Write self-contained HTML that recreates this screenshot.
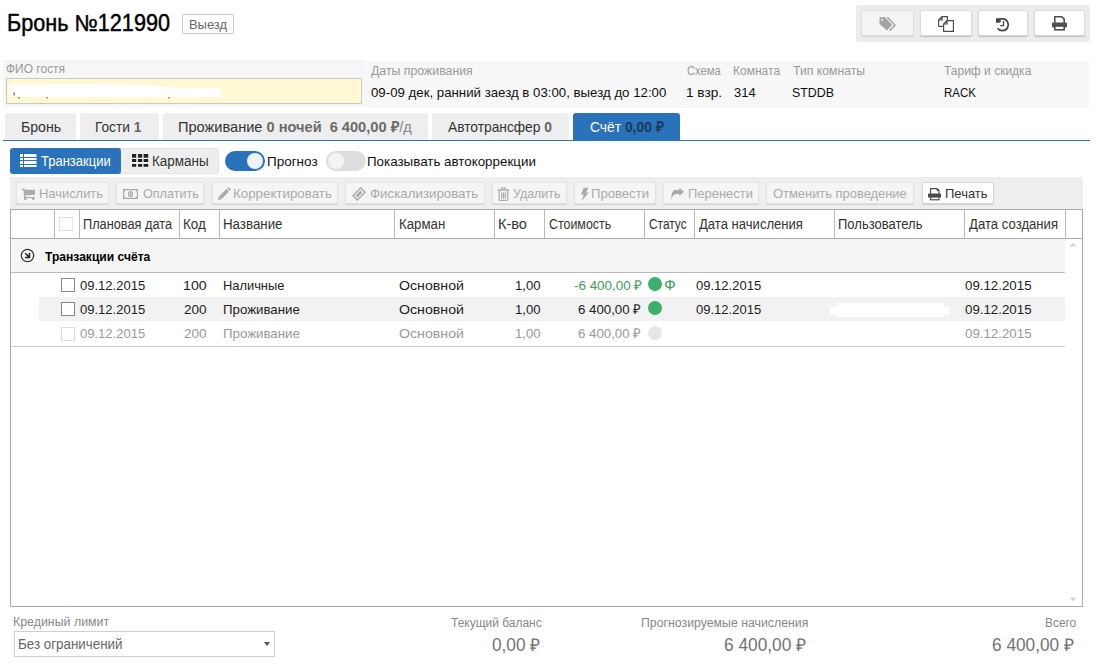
<!DOCTYPE html>
<html><head><meta charset="utf-8">
<style>
*{box-sizing:border-box;margin:0;padding:0}
html,body{width:1096px;height:667px;overflow:hidden;background:#fff}
body{position:relative;font-family:"Liberation Sans",sans-serif;color:#222;font-size:13px}
.a{position:absolute}
.t{position:absolute;white-space:nowrap;line-height:1;transform-origin:0 0}
svg{position:absolute;display:block}
</style></head><body>


<!-- title -->
<div class="a" style="left:182px;top:14px;width:52px;height:20px;border:1px solid #c8c8c8;border-radius:2px;background:#fff"></div>

<!-- top right toolbar -->
<div class="a" style="left:856px;top:5px;width:234px;height:37px;background:#ececec;border-radius:3px"></div>
<div class="a" style="left:861px;top:10px;width:53px;height:26px;background:#f4f4f4;border:1px solid #e0e0e0;border-radius:2px;box-shadow:0 1px 1px rgba(0,0,0,.12)"></div>
<div class="a" style="left:920px;top:10px;width:52px;height:26px;background:#fff;border:1px solid #dcdcdc;border-radius:2px;box-shadow:0 1px 1px rgba(0,0,0,.2)"></div>
<div class="a" style="left:978px;top:10px;width:50px;height:26px;background:#fff;border:1px solid #dcdcdc;border-radius:2px;box-shadow:0 1px 1px rgba(0,0,0,.2)"></div>
<div class="a" style="left:1034px;top:10px;width:51px;height:26px;background:#fff;border:1px solid #dcdcdc;border-radius:2px;box-shadow:0 1px 1px rgba(0,0,0,.2)"></div>
<svg style="left:878px;top:16px" width="20" height="16" viewBox="0 0 20 16"><path d="M1.5 1.2 H7 L14.2 9 L8.8 14.6 L1.5 7.8 Z" fill="#a3a3a3"/><rect x="3.3" y="3" width="1.8" height="1.8" fill="#f4f4f4"/><path d="M9.4 1.2 L17 9.2 L11.6 14.8" fill="none" stroke="#a3a3a3" stroke-width="1.5"/></svg>
<svg style="left:937px;top:15px" width="18" height="18" viewBox="0 0 18 18"><path d="M1.6 11.4 V5 L5 1.6 H10.4 V5.2 M1.6 11.4 H6.4 M5 1.6 V5 H1.6" fill="none" stroke="#4a4a4a" stroke-width="1.15"/><path d="M6.6 16.4 V9 L10 5.6 H16.4 V16.4 Z M10 5.6 V9 H6.6" fill="#fff" stroke="#4a4a4a" stroke-width="1.15"/></svg>
<svg style="left:995px;top:16px" width="16" height="16" viewBox="0 0 16 16"><path d="M4.5 2.9 H8 A5.9 5.9 0 1 1 2.6 12.2" fill="none" stroke="#474747" stroke-width="1.75"/><path d="M1 2.2 H5.8 V5.2 L4.4 6.7 H1 Z" fill="#474747"/><path d="M8.5 5 V9.6 H5.2" fill="none" stroke="#474747" stroke-width="1.3"/></svg>
<svg style="left:1051px;top:15px" width="17" height="16" viewBox="0 0 17 16"><path d="M3.8 8 V1.8 H10.8 L13.2 4.2 V8" fill="none" stroke="#505050" stroke-width="1.6"/><rect x="1" y="7.4" width="15" height="5" rx="1" fill="#505050"/><rect x="3.8" y="11" width="9.4" height="3.8" fill="#fff" stroke="#505050" stroke-width="1.6"/></svg>

<!-- info panel -->
<div class="a" style="left:3px;top:60px;width:362px;height:47px;background:#f6f6f6;border-top:1px solid #f0f0f0"></div><div class="a" style="left:365px;top:61px;width:724px;height:47px;background:#f7f7f7"></div>
<div class="a" style="left:6px;top:78px;width:356px;height:26px;background:#fef9d3;border:1px solid #c9c9c9"></div>
<svg style="left:0px;top:76px" width="230" height="30" viewBox="0 76 230 30"><path d="M10 84.6 L60 84 L120 84.2 L150 85.5 L175 87.5 L221 88.6 L221 97.6 L150 97.2 L95 97.6 L70 97.3 L10 96.6 Z" fill="#fff"/><rect x="13.6" y="92.4" width="1" height="3" fill="#5a3a20"/><rect x="18.4" y="97.2" width="1.2" height="1.2" fill="#20305a"/><rect x="46.4" y="97.2" width="1.2" height="1.2" fill="#5a3a20"/><rect x="168.2" y="97.2" width="1.2" height="1.2" fill="#5a3a20"/></svg>

<!-- tabs -->
<div class="a" style="left:5px;top:113px;width:71px;height:27px;background:#eee;border-radius:3px 3px 0 0"></div>
<div class="a" style="left:80px;top:113px;width:79px;height:27px;background:#eee;border-radius:3px 3px 0 0"></div>
<div class="a" style="left:163px;top:113px;width:265px;height:27px;background:#eee;border-radius:3px 3px 0 0"></div>
<div class="a" style="left:432px;top:113px;width:137px;height:27px;background:#eee;border-radius:3px 3px 0 0"></div>
<div class="a" style="left:573px;top:113px;width:107px;height:27px;background:#2a72b9;border-radius:3px 3px 0 0"></div>
<div class="a" style="left:3px;top:140px;width:1087px;height:1px;background:#2f72b8"></div>

<!-- segmented -->
<div class="a" style="left:10px;top:148px;width:209px;height:26px;background:#eee;border:1px solid #e2e2e2;border-radius:3px"></div>
<div class="a" style="left:10px;top:148px;width:111px;height:26px;background:#2a72b9;border-radius:3px"></div>
<svg style="left:19px;top:153px" width="19" height="15" viewBox="0 0 19 15"><g fill="#fff"><rect x="1" y="1" width="3" height="3"/><rect x="5" y="1" width="12.5" height="3"/><rect x="1" y="5" width="3" height="2"/><rect x="5" y="5" width="12.5" height="2"/><rect x="1" y="8" width="3" height="3"/><rect x="5" y="8" width="12.5" height="3"/><rect x="1" y="12" width="3" height="2"/><rect x="5" y="12" width="12.5" height="2"/></g></svg>
<svg style="left:131px;top:153px" width="19" height="15" viewBox="0 0 19 15"><g fill="#222"><rect x="1" y="1" width="4.2" height="3.7"/><rect x="7" y="1" width="4.2" height="3.7"/><rect x="12.6" y="1" width="4.6" height="3.7"/><rect x="1" y="6" width="4.2" height="3"/><rect x="7" y="6" width="4.2" height="3"/><rect x="12.6" y="6" width="4.6" height="3"/><rect x="1" y="11" width="4.2" height="2.8"/><rect x="7" y="11" width="4.2" height="2.8"/><rect x="12.6" y="11" width="4.6" height="2.8"/></g></svg>

<!-- toggles -->
<div class="a" style="left:225px;top:151px;width:40px;height:20px;background:#2a72b9;border-radius:10px"></div>
<div class="a" style="left:247px;top:153px;width:16px;height:16px;background:#eef3f9;border-radius:50%"></div>
<div class="a" style="left:326px;top:151px;width:40px;height:20px;background:#ddd;border-radius:10px"></div>
<div class="a" style="left:327px;top:152px;width:18px;height:18px;background:#f4f4f4;border:1px solid #ddd;border-radius:50%"></div>

<!-- action toolbar -->
<div class="a" style="left:10px;top:177px;width:1073px;height:33px;background:#eee"></div>
<div class="a" style="left:16px;top:182px;width:93px;height:22px;background:#f5f5f5;border:1px solid #e4e4e4;border-radius:2px;box-shadow:0 1px 1px rgba(0,0,0,.12)"></div>
<div class="a" style="left:116px;top:182px;width:88px;height:22px;background:#f5f5f5;border:1px solid #e4e4e4;border-radius:2px;box-shadow:0 1px 1px rgba(0,0,0,.12)"></div>
<div class="a" style="left:212px;top:182px;width:126px;height:22px;background:#f5f5f5;border:1px solid #e4e4e4;border-radius:2px;box-shadow:0 1px 1px rgba(0,0,0,.12)"></div>
<div class="a" style="left:345px;top:182px;width:140px;height:22px;background:#f5f5f5;border:1px solid #e4e4e4;border-radius:2px;box-shadow:0 1px 1px rgba(0,0,0,.12)"></div>
<div class="a" style="left:492px;top:182px;width:75px;height:22px;background:#f5f5f5;border:1px solid #e4e4e4;border-radius:2px;box-shadow:0 1px 1px rgba(0,0,0,.12)"></div>
<div class="a" style="left:574px;top:182px;width:82px;height:22px;background:#f5f5f5;border:1px solid #e4e4e4;border-radius:2px;box-shadow:0 1px 1px rgba(0,0,0,.12)"></div>
<div class="a" style="left:663px;top:182px;width:96px;height:22px;background:#f5f5f5;border:1px solid #e4e4e4;border-radius:2px;box-shadow:0 1px 1px rgba(0,0,0,.12)"></div>
<div class="a" style="left:766px;top:182px;width:148px;height:22px;background:#f5f5f5;border:1px solid #e4e4e4;border-radius:2px;box-shadow:0 1px 1px rgba(0,0,0,.12)"></div>
<div class="a" style="left:922px;top:182px;width:72px;height:22px;background:#fff;border:1px solid #d5d5d5;border-radius:2px;box-shadow:0 1px 1px rgba(0,0,0,.12)"></div>


<!-- action icons -->
<svg style="left:21px;top:188px" width="15" height="13" viewBox="0 0 15 13"><g fill="#aaa"><path d="M0.8 0.8 H3.8 L4.6 11.8 H3.2 L2.6 2.2 H0.8 Z"/><path d="M3.6 1.8 H14 V6.8 L4.4 7.6 Z"/><rect x="4" y="9" width="9.6" height="1.1"/><rect x="3.4" y="9" width="2" height="3"/><rect x="11.4" y="9" width="2" height="3"/></g></svg>
<svg style="left:122px;top:188px" width="17" height="12" viewBox="0 0 17 12"><g fill="#aaa"><path d="M1 1 H16 V11 H1 Z M2.2 3.6 V8.4 L3.6 9.8 H13.4 L14.8 8.4 V3.6 L13.4 2.2 H3.6 Z" fill-rule="evenodd"/><path d="M8.5 3 A2.6 3 0 1 0 8.5 9 A2.6 3 0 1 0 8.5 3 Z M8.5 4.2 A1.4 1.8 0 1 1 8.5 7.8 A1.4 1.8 0 1 1 8.5 4.2 Z" fill-rule="evenodd"/><rect x="8" y="4.6" width="1.2" height="2.8"/></g></svg>
<svg style="left:217px;top:187px" width="14" height="14" viewBox="0 0 14 14"><g fill="#aaa"><path d="M1 13 L1.8 9.6 L9.4 2 L12 4.6 L4.4 12.2 Z"/><path d="M10.2 1.2 L11.2 0.4 Q11.6 0.1 12 0.4 L13.6 2 Q13.9 2.4 13.6 2.8 L12.8 3.8 Z"/></g><path d="M2.6 10 L4 11.4" stroke="#f5f5f5" stroke-width="0.8"/></svg>
<svg style="left:351px;top:186px" width="16" height="16" viewBox="0 0 16 16"><g transform="rotate(-45 8 8)" fill="#aaa"><path d="M1.8 4.2 H14.2 V11.8 H1.8 Z M3.4 5.6 V10.4 H12.6 V5.6 Z" fill-rule="evenodd"/><rect x="4.6" y="6.6" width="6.8" height="2.8"/></g></svg>
<svg style="left:497px;top:187px" width="13" height="14" viewBox="0 0 13 14"><g fill="none" stroke="#aaa" stroke-width="1.2"><path d="M2.2 3.6 V12.4 Q2.2 13.4 3.2 13.4 H9.8 Q10.8 13.4 10.8 12.4 V3.6"/><path d="M4.6 2.6 V1 H8.4 V2.6"/><path d="M4.7 5.4 V11.4 M6.5 5.4 V11.4 M8.3 5.4 V11.4"/></g><rect x="0.8" y="2.4" width="11.4" height="1.4" fill="#aaa"/></svg>
<svg style="left:580px;top:187px" width="9" height="14" viewBox="0 0 9 14"><path d="M3.8 0.8 H8.4 L6 5.6 H8.8 L2 13.8 L3.6 7.4 H0.9 Z" fill="#aaa"/></svg>
<svg style="left:669px;top:187px" width="16" height="14" viewBox="0 0 16 14"><path d="M15 4.8 L10.2 0.8 V3 H7.2 C3.8 3 2 5.4 2.4 13.2 C3.2 9.2 4.8 7 7.8 7 H10.2 V8.9 Z" fill="#aaa"/></svg>
<svg style="left:927px;top:187px" width="15" height="14" viewBox="0 0 15 14"><path d="M3.6 6.8 V1.6 H10 L12 3.6 V6.8" fill="none" stroke="#4a4a4a" stroke-width="1.15"/><path d="M9.6 1.2 L12.4 4 H9.6 Z" fill="#4a4a4a"/><rect x="1" y="6.4" width="13" height="4.2" rx="0.6" fill="#4a4a4a"/><rect x="3.6" y="10" width="8.4" height="2.8" fill="#fff" stroke="#4a4a4a" stroke-width="1.15"/></svg>

<!-- table -->
<div class="a" style="left:10px;top:209px;width:1073px;height:398px;border:1px solid #aaa;background:#fff"></div>
<div class="a" style="left:11px;top:238px;width:1071px;height:1px;background:#aaa"></div>
<div class="a" style="left:54px;top:210px;width:1px;height:28px;background:#bbb"></div>
<div class="a" style="left:79px;top:210px;width:1px;height:28px;background:#bbb"></div>
<div class="a" style="left:179px;top:210px;width:1px;height:28px;background:#bbb"></div>
<div class="a" style="left:219px;top:210px;width:1px;height:28px;background:#bbb"></div>
<div class="a" style="left:394px;top:210px;width:1px;height:28px;background:#bbb"></div>
<div class="a" style="left:494px;top:210px;width:1px;height:28px;background:#bbb"></div>
<div class="a" style="left:544px;top:210px;width:1px;height:28px;background:#bbb"></div>
<div class="a" style="left:644px;top:210px;width:1px;height:28px;background:#bbb"></div>
<div class="a" style="left:694px;top:210px;width:1px;height:28px;background:#bbb"></div>
<div class="a" style="left:834px;top:210px;width:1px;height:28px;background:#bbb"></div>
<div class="a" style="left:964px;top:210px;width:1px;height:28px;background:#bbb"></div>
<div class="a" style="left:1065px;top:210px;width:1px;height:28px;background:#bbb"></div>
<div class="a" style="left:59px;top:217px;width:14px;height:14px;border:1px solid #e2e2e2;background:#fff"></div>

<!-- group row -->
<div class="a" style="left:11px;top:239px;width:1054px;height:33px;background:#f5f5f5"></div>
<div class="a" style="left:11px;top:272px;width:1054px;height:1px;background:#bbb"></div>
<svg style="left:19px;top:247px" width="17" height="17" viewBox="0 0 17 17"><circle cx="8.5" cy="8.5" r="6.2" fill="none" stroke="#333" stroke-width="1.3"/><path d="M6.2 6.2 L10.3 10.3 M6 10.5 H10.5 V6" fill="none" stroke="#222" stroke-width="1.5"/></svg>

<!-- rows -->
<div class="a" style="left:39px;top:297px;width:1026px;height:24px;background:#f2f2f2"></div>
<div class="a" style="left:837px;top:303px;width:107px;height:14px;background:#fff"></div><div class="a" style="left:830px;top:306.5px;width:119px;height:8px;background:#fff"></div>
<div class="a" style="left:11px;top:346px;width:1054px;height:1px;background:#ccc"></div>

<div class="a" style="left:61px;top:278px;width:14px;height:14px;border:1px solid #888;background:#fff"></div>
<div class="a" style="left:648px;top:277px;width:14px;height:14px;border-radius:50%;background:#3caf6a"></div>

<div class="a" style="left:61px;top:302px;width:14px;height:14px;border:1px solid #888;background:#fff"></div>
<div class="a" style="left:648px;top:301px;width:14px;height:14px;border-radius:50%;background:#3caf6a"></div>

<div class="a" style="left:61px;top:327px;width:14px;height:14px;border:1px solid #ddd;background:#fff"></div>
<div class="a" style="left:648px;top:326px;width:14px;height:14px;border-radius:50%;background:#e6e6e6"></div>

<!-- scrollbar arrows -->
<svg style="left:1069px;top:242px" width="8" height="5" viewBox="0 0 8 5"><path d="M0.5 4.5 L4 0.8 L7.5 4.5 Z" fill="#d4d4d4"/></svg>
<svg style="left:1069px;top:597px" width="8" height="5" viewBox="0 0 8 5"><path d="M0.5 0.5 L4 4.2 L7.5 0.5 Z" fill="#d4d4d4"/></svg>

<!-- footer -->
<div class="a" style="left:14px;top:631px;width:261px;height:26px;border:1px solid #d0d0d0;background:#fff"></div>
<svg style="left:263px;top:641px" width="8" height="6" viewBox="0 0 8 6"><path d="M1 1 H7 L4 5 Z" fill="#555"/></svg>


<div class="t" style="left:7.12px;top:12.00px;font-size:23px;font-weight:400;color:#000;transform:scaleX(0.9415);-webkit-text-stroke:0.45px #000;">Бронь №121990</div>
<div class="t" style="left:188.74px;top:18.00px;font-size:13.5px;font-weight:400;color:#666;transform:scaleX(0.9564);">Выезд</div>
<div class="t" style="left:6.40px;top:63.00px;font-size:12px;font-weight:400;color:#999;transform:scaleX(0.9983);">ФИО гостя</div>
<div class="t" style="left:371.40px;top:65.00px;font-size:12px;font-weight:400;color:#999;transform:scaleX(1.0263);">Даты проживания</div>
<div class="t" style="left:686.70px;top:65.00px;font-size:12px;font-weight:400;color:#999;transform:scaleX(0.9361);">Схема</div>
<div class="t" style="left:732.60px;top:65.00px;font-size:12px;font-weight:400;color:#999;transform:scaleX(1.0022);">Комната</div>
<div class="t" style="left:793.00px;top:65.00px;font-size:12px;font-weight:400;color:#999;transform:scaleX(1.0171);">Тип комнаты</div>
<div class="t" style="left:944.40px;top:65.00px;font-size:12px;font-weight:400;color:#999;transform:scaleX(1.0011);">Тариф и скидка</div>
<div class="t" style="left:371.40px;top:86.00px;font-size:13.6px;font-weight:400;color:#111;transform:scaleX(0.9743);">09-09 дек, ранний заезд в 03:00, выезд до 12:00</div>
<div class="t" style="left:685.70px;top:86.00px;font-size:13.6px;font-weight:400;color:#111;transform:scaleX(1.0029);">1 взр.</div>
<div class="t" style="left:733.60px;top:86.00px;font-size:13.6px;font-weight:400;color:#111;transform:scaleX(0.9522);">314</div>
<div class="t" style="left:792.09px;top:86.00px;font-size:13.6px;font-weight:400;color:#111;transform:scaleX(0.9133);">STDDB</div>
<div class="t" style="left:943.55px;top:86.00px;font-size:13.6px;font-weight:400;color:#111;transform:scaleX(0.8459);">RACK</div>
<div class="t" style="left:20.76px;top:119.00px;font-size:15px;font-weight:400;color:#333;transform:scaleX(0.9415);">Бронь</div>
<div class="t" style="left:95.09px;top:119.00px;font-size:15px;font-weight:400;color:#333;transform:scaleX(0.9120);">Гости <span style="color:#666;font-weight:bold">1</span></div>
<div class="t" style="left:178.03px;top:119.00px;font-size:15px;font-weight:400;color:#333;transform:scaleX(0.9725);">Проживание <span style="color:#6a6a6a;font-weight:bold">0 ночей&nbsp; 6 400,00 ₽</span><span style="color:#888">/д</span></div>
<div class="t" style="left:448.00px;top:119.00px;font-size:15px;font-weight:400;color:#333;transform:scaleX(0.9177);">Автотрансфер <span style="color:#666;font-weight:bold">0</span></div>
<div class="t" style="left:589.50px;top:119.00px;font-size:15px;font-weight:400;color:#fff;transform:scaleX(0.9225);">Счёт <span style="color:#183a5c;font-weight:bold">0,00 ₽</span></div>
<div class="t" style="left:41.10px;top:154.00px;font-size:14px;font-weight:400;color:#fff;transform:scaleX(0.9280);">Транзакции</div>
<div class="t" style="left:152.04px;top:154.00px;font-size:14px;font-weight:400;color:#333;transform:scaleX(0.9614);">Карманы</div>
<div class="t" style="left:266.61px;top:155.00px;font-size:13.6px;font-weight:400;color:#111;transform:scaleX(0.9920);">Прогноз</div>
<div class="t" style="left:367.32px;top:155.00px;font-size:13.6px;font-weight:400;color:#111;transform:scaleX(0.9829);">Показывать автокоррекции</div>
<div class="t" style="left:38.65px;top:187.00px;font-size:13.6px;font-weight:400;color:#aaa;transform:scaleX(0.9500);">Начислить</div>
<div class="t" style="left:142.50px;top:187.00px;font-size:13.6px;font-weight:400;color:#aaa;transform:scaleX(0.9250);">Оплатить</div>
<div class="t" style="left:233.22px;top:187.00px;font-size:13.6px;font-weight:400;color:#aaa;transform:scaleX(0.9800);">Корректировать</div>
<div class="t" style="left:370.30px;top:187.00px;font-size:13.6px;font-weight:400;color:#aaa;transform:scaleX(0.9782);">Фискализировать</div>
<div class="t" style="left:513.10px;top:187.00px;font-size:13.6px;font-weight:400;color:#aaa;transform:scaleX(0.9135);">Удалить</div>
<div class="t" style="left:591.34px;top:187.00px;font-size:13.6px;font-weight:400;color:#aaa;transform:scaleX(0.9644);">Провести</div>
<div class="t" style="left:687.55px;top:187.00px;font-size:13.6px;font-weight:400;color:#aaa;transform:scaleX(0.9522);">Перенести</div>
<div class="t" style="left:773.30px;top:187.00px;font-size:13.6px;font-weight:400;color:#aaa;transform:scaleX(0.9496);">Отменить проведение</div>
<div class="t" style="left:944.64px;top:187.00px;font-size:13.6px;font-weight:400;color:#333;transform:scaleX(0.9558);">Печать</div>
<div class="t" style="left:83.38px;top:218.00px;font-size:13.8px;font-weight:400;color:#333;transform:scaleX(0.9240);">Плановая дата</div>
<div class="t" style="left:183.13px;top:218.00px;font-size:13.8px;font-weight:400;color:#333;transform:scaleX(0.9739);">Код</div>
<div class="t" style="left:223.34px;top:218.00px;font-size:13.8px;font-weight:400;color:#333;transform:scaleX(0.9650);">Название</div>
<div class="t" style="left:398.74px;top:218.00px;font-size:13.8px;font-weight:400;color:#333;transform:scaleX(0.9596);">Карман</div>
<div class="t" style="left:498.35px;top:218.00px;font-size:13.8px;font-weight:400;color:#333;transform:scaleX(1.0538);">К-во</div>
<div class="t" style="left:549.10px;top:218.00px;font-size:13.8px;font-weight:400;color:#333;transform:scaleX(0.9000);">Стоимость</div>
<div class="t" style="left:649.30px;top:218.00px;font-size:13.8px;font-weight:400;color:#333;transform:scaleX(0.8628);">Статус</div>
<div class="t" style="left:698.90px;top:218.00px;font-size:13.8px;font-weight:400;color:#333;transform:scaleX(0.9477);">Дата начисления</div>
<div class="t" style="left:838.26px;top:218.00px;font-size:13.8px;font-weight:400;color:#333;transform:scaleX(0.9432);">Пользователь</div>
<div class="t" style="left:968.60px;top:218.00px;font-size:13.8px;font-weight:400;color:#333;transform:scaleX(0.9527);">Дата создания</div>
<div class="t" style="left:44.90px;top:250.00px;font-size:13.2px;font-weight:700;color:#000;transform:scaleX(0.9155);">Транзакции счёта</div>
<div class="t" style="left:80.40px;top:279.00px;font-size:13.6px;font-weight:400;color:#222;transform:scaleX(0.9588);">09.12.2015</div>
<div class="t" style="left:182.76px;top:279.00px;font-size:13.6px;font-weight:400;color:#222;transform:scaleX(1.0429);">100</div>
<div class="t" style="left:222.75px;top:279.00px;font-size:13.6px;font-weight:400;color:#222;transform:scaleX(0.9469);">Наличные</div>
<div class="t" style="left:399.30px;top:279.00px;font-size:13.6px;font-weight:400;color:#222;transform:scaleX(1.0419);">Основной</div>
<div class="t" style="left:515.23px;top:279.00px;font-size:13.6px;font-weight:400;color:#222;transform:scaleX(0.9680);">1,00</div>
<div class="t" style="left:573.50px;top:279.00px;font-size:13.6px;font-weight:400;color:#3d9c5e;transform:scaleX(0.9855);">-6 400,00 ₽</div>
<div class="t" style="left:695.80px;top:279.00px;font-size:13.6px;font-weight:400;color:#222;transform:scaleX(0.9588);">09.12.2015</div>
<div class="t" style="left:964.80px;top:279.00px;font-size:13.6px;font-weight:400;color:#222;transform:scaleX(0.9779);">09.12.2015</div>
<div class="t" style="left:80.40px;top:303.00px;font-size:13.6px;font-weight:400;color:#222;transform:scaleX(0.9588);">09.12.2015</div>
<div class="t" style="left:183.80px;top:303.00px;font-size:13.6px;font-weight:400;color:#222;transform:scaleX(0.9955);">200</div>
<div class="t" style="left:222.72px;top:303.00px;font-size:13.6px;font-weight:400;color:#222;transform:scaleX(0.9756);">Проживание</div>
<div class="t" style="left:399.30px;top:303.00px;font-size:13.6px;font-weight:400;color:#222;transform:scaleX(1.0419);">Основной</div>
<div class="t" style="left:515.23px;top:303.00px;font-size:13.6px;font-weight:400;color:#222;transform:scaleX(0.9680);">1,00</div>
<div class="t" style="left:578.10px;top:303.00px;font-size:13.6px;font-weight:400;color:#222;transform:scaleX(0.9754);">6 400,00 ₽</div>
<div class="t" style="left:695.80px;top:303.00px;font-size:13.6px;font-weight:400;color:#222;transform:scaleX(0.9588);">09.12.2015</div>
<div class="t" style="left:964.80px;top:303.00px;font-size:13.6px;font-weight:400;color:#222;transform:scaleX(0.9779);">09.12.2015</div>
<div class="t" style="left:80.40px;top:327.00px;font-size:13.6px;font-weight:400;color:#999;transform:scaleX(0.9588);">09.12.2015</div>
<div class="t" style="left:183.80px;top:327.00px;font-size:13.6px;font-weight:400;color:#999;transform:scaleX(0.9955);">200</div>
<div class="t" style="left:222.72px;top:327.00px;font-size:13.6px;font-weight:400;color:#999;transform:scaleX(0.9756);">Проживание</div>
<div class="t" style="left:399.30px;top:327.00px;font-size:13.6px;font-weight:400;color:#999;transform:scaleX(1.0419);">Основной</div>
<div class="t" style="left:515.23px;top:327.00px;font-size:13.6px;font-weight:400;color:#999;transform:scaleX(0.9680);">1,00</div>
<div class="t" style="left:578.10px;top:327.00px;font-size:13.6px;font-weight:400;color:#999;transform:scaleX(0.9754);">6 400,00 ₽</div>
<div class="t" style="left:964.80px;top:327.00px;font-size:13.6px;font-weight:400;color:#999;transform:scaleX(0.9779);">09.12.2015</div>
<div class="t" style="left:664.43px;top:278.00px;font-size:14.5px;font-weight:400;color:#3d9c5e;transform:scaleX(1.0700);">Ф</div>
<div class="t" style="left:13.47px;top:616.00px;font-size:12px;font-weight:400;color:#888;transform:scaleX(1.0315);">Крединый лимит</div>
<div class="t" style="left:17.53px;top:638.00px;font-size:13.8px;font-weight:400;color:#666;transform:scaleX(0.9689);">Без ограничений</div>
<div class="t" style="left:451.20px;top:617.00px;font-size:12px;font-weight:400;color:#888;transform:scaleX(0.9978);">Текущий баланс</div>
<div class="t" style="left:492.00px;top:637.00px;font-size:17.5px;font-weight:400;color:#737373;transform:scaleX(0.9837);">0,00 ₽</div>
<div class="t" style="left:641.37px;top:617.00px;font-size:12px;font-weight:400;color:#888;transform:scaleX(1.0253);">Прогнозируемые начисления</div>
<div class="t" style="left:723.91px;top:637.00px;font-size:17.5px;font-weight:400;color:#737373;transform:scaleX(0.9878);">6 400,00 ₽</div>
<div class="t" style="left:1044.81px;top:617.00px;font-size:12px;font-weight:400;color:#888;transform:scaleX(0.9933);">Всего</div>
<div class="t" style="left:992.01px;top:637.00px;font-size:17.5px;font-weight:400;color:#737373;transform:scaleX(0.9866);">6 400,00 ₽</div>
</body></html>
